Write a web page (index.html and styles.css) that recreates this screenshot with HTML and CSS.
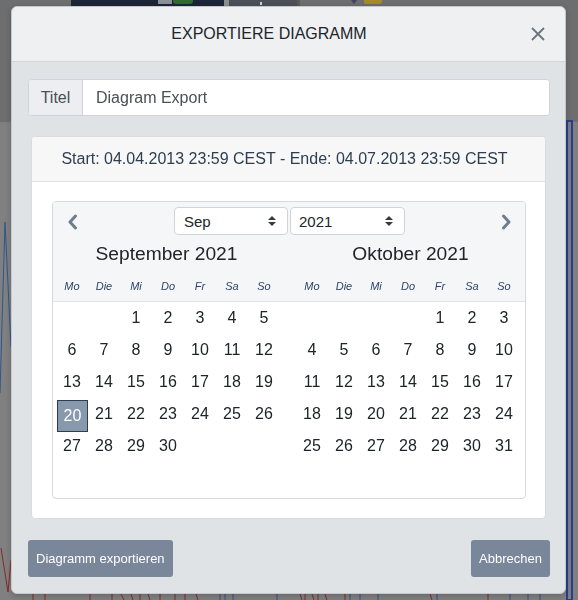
FILE: index.html
```html
<!DOCTYPE html>
<html lang="de">
<head>
<meta charset="utf-8">
<title>Exportiere Diagramm</title>
<link rel="stylesheet" href="styles.css">
</head>
<body>
<div class="backdrop" aria-hidden="true">
  <svg width="578" height="600" viewBox="0 0 578 600">
    <rect x="0" y="0" width="578" height="600" fill="#808080"/>
    <rect x="0" y="0" width="578" height="122" fill="#6e6e6e"/>
    <rect x="71" y="0" width="153" height="10" fill="#1c2536"/>
    <rect x="158" y="0" width="14" height="4" fill="#8b9099"/>
    <rect x="173" y="-4" width="20" height="8" rx="3" fill="#2f6b34"/>
    <rect x="224" y="0" width="5" height="10" fill="#8e8e8e"/>
    <rect x="229" y="0" width="68" height="10" fill="#4b4f57"/>
    <rect x="260" y="2" width="2" height="3" fill="#cfd3d8"/>
    <rect x="297" y="0" width="3" height="10" fill="#5a5a5a"/>
    <polygon points="351,0 357,0 354,4" fill="#3b4660"/>
    <rect x="364" y="-4" width="18" height="8" rx="2" fill="#a38a2a"/>
    <rect x="567" y="121" width="5" height="479" fill="#7d7f88" stroke="#2a3d8a" stroke-width="2"/>
    <polyline points="0,393 5,222 11,347" fill="none" stroke="#2f5592" stroke-width="1"/>
    <polyline points="1,548 8,592 11,560" fill="none" stroke="#8a2a24" stroke-width="1"/>
    <g stroke="#8a2a24" stroke-width="1">
      <line x1="33" y1="594" x2="33" y2="600"/><line x1="45" y1="594" x2="45" y2="600"/>
      <line x1="90" y1="594" x2="90" y2="600"/><line x1="112" y1="594" x2="112" y2="600"/>
      <line x1="121" y1="594" x2="124" y2="600"/><line x1="131" y1="594" x2="133" y2="600"/>
      <line x1="140" y1="594" x2="140" y2="600"/><line x1="148" y1="594" x2="150" y2="600"/>
      <line x1="160" y1="594" x2="160" y2="600"/><line x1="175" y1="594" x2="175" y2="600"/>
      <line x1="185" y1="594" x2="185" y2="600"/><line x1="196" y1="594" x2="198" y2="600"/>
      <line x1="300" y1="594" x2="302" y2="600"/><line x1="305" y1="594" x2="305" y2="600"/>
      <line x1="312" y1="594" x2="314" y2="600"/><line x1="318" y1="594" x2="318" y2="600"/>
      <line x1="325" y1="594" x2="327" y2="600"/><line x1="345" y1="594" x2="345" y2="600"/>
      <line x1="430" y1="594" x2="432" y2="600"/><line x1="488" y1="594" x2="488" y2="600"/>
    </g>
    <g stroke="#2f5592" stroke-width="1">
      <line x1="220" y1="594" x2="220" y2="600"/><line x1="225" y1="594" x2="225" y2="600"/>
      <line x1="233" y1="594" x2="233" y2="600"/><line x1="277" y1="594" x2="277" y2="600"/>
      <line x1="350" y1="594" x2="350" y2="600"/><line x1="360" y1="594" x2="360" y2="600"/>
      <line x1="378" y1="594" x2="378" y2="600"/><line x1="437" y1="594" x2="437" y2="600"/>
      <line x1="510" y1="594" x2="510" y2="600"/><line x1="528" y1="594" x2="528" y2="600"/>
      <line x1="540" y1="594" x2="540" y2="600"/>
    </g>
  </svg>
</div>

<div class="modal" role="dialog" aria-labelledby="modal-title">
  <div class="modal-header">
    <h5 class="modal-title" id="modal-title">EXPORTIERE DIAGRAMM</h5>
    <button class="close" type="button" aria-label="Schließen">
      <svg width="14" height="14" viewBox="0 0 14 14"><path d="M1 1 L13 13 M13 1 L1 13" stroke="#6c757d" stroke-width="1.8" fill="none"/></svg>
    </button>
  </div>

  <div class="modal-body">
    <div class="input-group">
      <span class="input-label">Titel</span>
      <input class="input" type="text" value="Diagram Export">
    </div>

    <div class="card">
      <div class="card-header">Start: 04.04.2013 23:59 CEST - Ende: 04.07.2013 23:59 CEST</div>
      <div class="card-body">
        <div class="calendar">
          <div class="cal-head">
            <div class="cal-nav">
              <button class="nav-btn prev" type="button" aria-label="Vorheriger Monat">
                <svg width="11" height="16" viewBox="0 0 11 16"><path d="M8.5 2 L3 8 L8.5 14" stroke="#6f7d8f" stroke-width="3" fill="none" stroke-linecap="round" stroke-linejoin="round"/></svg>
              </button>
              <div class="selects">
                <div class="select-box sel-month"><span>Sep</span>
                  <svg width="8" height="10" viewBox="0 0 8 10"><path d="M4 0 L8 4 H0 Z M4 10 L0 6 H8 Z" fill="#343a40"/></svg>
                </div>
                <div class="select-box sel-year"><span>2021</span>
                  <svg width="8" height="10" viewBox="0 0 8 10"><path d="M4 0 L8 4 H0 Z M4 10 L0 6 H8 Z" fill="#343a40"/></svg>
                </div>
              </div>
              <button class="nav-btn next" type="button" aria-label="Nächster Monat">
                <svg width="11" height="16" viewBox="0 0 11 16"><path d="M2.5 2 L8 8 L2.5 14" stroke="#6f7d8f" stroke-width="3" fill="none" stroke-linecap="round" stroke-linejoin="round"/></svg>
              </button>
            </div>
            <div class="months-head">
              <div class="month-head first">
                <div class="month-title">September 2021</div>
                <div class="dow"><span>Mo</span><span>Die</span><span>Mi</span><span>Do</span><span>Fr</span><span>Sa</span><span>So</span></div>
              </div>
              <div class="month-head second">
                <div class="month-title">Oktober 2021</div>
                <div class="dow"><span>Mo</span><span>Die</span><span>Mi</span><span>Do</span><span>Fr</span><span>Sa</span><span>So</span></div>
              </div>
            </div>
          </div>
          <div class="months-body">
            <div class="days">
              <div></div><div></div><div>1</div><div>2</div><div>3</div><div>4</div><div>5</div>
              <div>6</div><div>7</div><div>8</div><div>9</div><div>10</div><div>11</div><div>12</div>
              <div>13</div><div>14</div><div>15</div><div>16</div><div>17</div><div>18</div><div>19</div>
              <div class="selected">20</div><div>21</div><div>22</div><div>23</div><div>24</div><div>25</div><div>26</div>
              <div>27</div><div>28</div><div>29</div><div>30</div>
            </div>
            <div class="days">
              <div></div><div></div><div></div><div></div><div>1</div><div>2</div><div>3</div>
              <div>4</div><div>5</div><div>6</div><div>7</div><div>8</div><div>9</div><div>10</div>
              <div>11</div><div>12</div><div>13</div><div>14</div><div>15</div><div>16</div><div>17</div>
              <div>18</div><div>19</div><div>20</div><div>21</div><div>22</div><div>23</div><div>24</div>
              <div>25</div><div>26</div><div>27</div><div>28</div><div>29</div><div>30</div><div>31</div>
            </div>
          </div>
        </div>
      </div>
    </div>
  </div>

  <div class="modal-footer">
    <button class="btn" type="button">Diagramm exportieren</button>
    <button class="btn" type="button">Abbrechen</button>
  </div>
</div>
</body>
</html>
```

FILE: styles.css
```css
* { box-sizing: border-box; }

html, body {
  margin: 0;
  height: 100%;
}

body {
  padding: 6px 0 0 11px;
  background: #808080;
  font-family: "Liberation Sans", Arial, sans-serif;
  color: #212529;
  overflow: hidden;
}

.backdrop {
  position: fixed;
  inset: 0;
  z-index: 0;
}
.backdrop svg { display: block; }

.modal {
  position: relative;
  z-index: 1;
  width: 555px;
  height: 588px;
  display: flex;
  flex-direction: column;
  background: #dfe3e6;
  border: 1px solid #c4c7cb;
  border-radius: 6px;
  overflow: hidden;
  box-shadow: 0 2px 6px rgba(0, 0, 0, 0.2);
}

/* Header */
.modal-header {
  flex: none;
  height: 55px;
  display: flex;
  align-items: center;
  padding-left: 16px;
  background: #eef0f2;
  border-bottom: 1px solid #d3d6da;
}
.modal-title {
  flex: 1;
  margin: 0;
  text-align: center;
  font-size: 16px;
  font-weight: 400;
  line-height: 20px;
  color: #212529;
}
.close {
  width: 55px;
  height: 54px;
  padding: 0;
  display: flex;
  align-items: center;
  justify-content: center;
  background: none;
  border: 0;
}
.close svg { display: block; }

/* Body */
.modal-body {
  flex: none;
  padding: 17px 15px 0 16px;
}

.input-group {
  display: flex;
  height: 37px;
  border: 1px solid #ced4da;
  border-radius: 4px;
  overflow: hidden;
  background: #fff;
}
.input-label {
  width: 54px;
  flex: none;
  display: flex;
  align-items: center;
  justify-content: center;
  font-size: 16px;
  color: #495057;
  background: #eceef1;
  border-right: 1px solid #ced4da;
}
.input {
  flex: 1;
  min-width: 0;
  border: 0;
  padding: 0 13px;
  font: inherit;
  font-size: 16px;
  color: #495057;
  background: #fff;
  outline: none;
}

.card {
  margin: 20px 4px 0 3px;
  border: 1px solid #d9dcdf;
  border-radius: 4px;
  background: #fff;
  overflow: hidden;
}
.card-header {
  height: 45px;
  display: flex;
  align-items: center;
  justify-content: center;
  padding: 0 8px 1px 0;
  background: #f7f7f7;
  border-bottom: 1px solid #dcdee0;
  font-size: 16px;
  color: #2c3e50;
}
.card-body {
  padding: 19px 19px 19px 20px;
}

/* Calendar */
.calendar {
  height: 298px;
  border: 1px solid #d6dade;
  border-radius: 4px;
  overflow: hidden;
}
.cal-head {
  height: 100px;
  padding-top: 5px;
  background: #f5f6f8;
  border-bottom: 1px solid #dfe2e6;
}
.cal-nav {
  display: grid;
  grid-template-columns: 1fr auto 1fr;
  align-items: center;
  height: 28px;
  padding: 0 13px 0 14px;
}
.nav-btn {
  padding: 0;
  border: 0;
  background: none;
  display: flex;
  width: 11px;
  height: 16px;
}
.nav-btn.prev { justify-self: start; margin-top: 1px; }
.nav-btn.next { justify-self: end; margin-top: 1px; }

.selects {
  display: flex;
  gap: 2px;
}
.select-box {
  height: 28px;
  display: flex;
  align-items: center;
  justify-content: space-between;
  background: #fff;
  border: 1px solid #ced4da;
  border-radius: 4px;
  font-size: 15px;
  color: #212529;
}
.sel-month { width: 114px; padding: 0 11px 0 9px; }
.sel-year { width: 115px; padding: 0 11px 0 8px; }
.select-box svg { display: block; }

.months-head {
  display: flex;
  gap: 16px;
  padding: 0 5px 0 3px;
}
.month-head { width: 224px; }
.month-head.first .month-title { padding-right: 3px; }
.month-head.second .month-title { padding-left: 5px; }
.month-title {
  margin-top: 8px;
  height: 22px;
  line-height: 22px;
  text-align: center;
  font-size: 19.2px;
  color: #212529;
}
.dow {
  margin-top: 13px;
  display: grid;
  grid-template-columns: repeat(7, 32px);
  line-height: 16px;
  font-size: 11px;
  font-style: italic;
  color: #2c4468;
  text-align: center;
}

.months-body {
  display: flex;
  gap: 16px;
  padding: 0 5px 0 3px;
}
.days {
  width: 224px;
  display: grid;
  grid-template-columns: repeat(7, 32px);
  grid-auto-rows: 32px;
}
.days div {
  display: flex;
  align-items: center;
  justify-content: center;
  font-size: 16px;
  color: #212529;
}
.days .selected {
  margin: 2px 0 -2px 1px;
  background: #8898ad;
  border: 1px solid #2c3e50;
  color: #fff;
}

/* Footer */
.modal-footer {
  flex: none;
  display: flex;
  justify-content: space-between;
  padding: 21px 15px 0 16px;
}
.btn {
  height: 37px;
  padding: 0 8px;
  border: 0;
  border-radius: 3px;
  background: #7a8699;
  color: #fff;
  font-family: "Liberation Sans", Arial, sans-serif;
  font-size: 13px;
}
```
